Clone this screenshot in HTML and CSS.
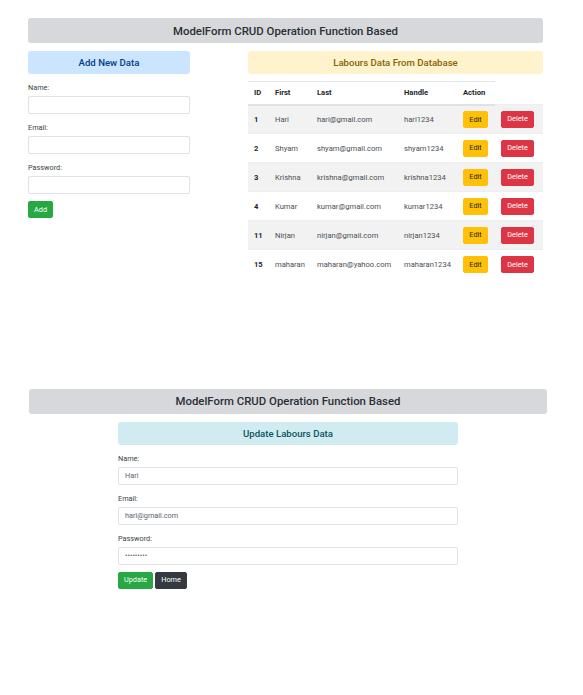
FILE: index.html
```html
<!DOCTYPE html>
<html>
<head>
<meta charset="utf-8">
<link rel="stylesheet" href="styles.css">
</head>
<body>
<section class="page page-one">
  <div class="banner">ModelForm CRUD Operation Function Based</div>
  <div class="columns">
    <div class="left">
      <div class="alert alert-primary">Add New Data</div>
      <form class="form">
        <label class="lbl">Name:</label>
        <input class="field" type="text">
        <label class="lbl">Email:</label>
        <input class="field" type="text">
        <label class="lbl">Password:</label>
        <input class="field" type="password">
        <button type="button" class="btn btn-green">Add</button>
      </form>
    </div>
    <div class="right">
      <div class="alert alert-warning">Labours Data From Database</div>
      <table class="tbl">
        <colgroup>
          <col class="c-id"><col class="c-first"><col class="c-last"><col class="c-handle"><col class="c-edit"><col class="c-del">
        </colgroup>
        <thead>
          <tr><th>ID</th><th>First</th><th>Last</th><th>Handle</th><th>Action</th></tr>
        </thead>
        <tbody>
          <tr class="odd"><th>1</th><td>Hari</td><td>hari@gmail.com</td><td>hari1234</td><td><span class="btn btn-yellow">Edit</span></td><td><span class="btn btn-red">Delete</span></td></tr>
          <tr><th>2</th><td>Shyam</td><td>shyam@gmail.com</td><td>shyam1234</td><td><span class="btn btn-yellow">Edit</span></td><td><span class="btn btn-red">Delete</span></td></tr>
          <tr class="odd"><th>3</th><td>Krishna</td><td>krishna@gmail.com</td><td>krishna1234</td><td><span class="btn btn-yellow">Edit</span></td><td><span class="btn btn-red">Delete</span></td></tr>
          <tr><th>4</th><td>Kumar</td><td>kumar@gmail.com</td><td>kumar1234</td><td><span class="btn btn-yellow">Edit</span></td><td><span class="btn btn-red">Delete</span></td></tr>
          <tr class="odd"><th>11</th><td>Nirjan</td><td>nirjan@gmail.com</td><td>nirjan1234</td><td><span class="btn btn-yellow">Edit</span></td><td><span class="btn btn-red">Delete</span></td></tr>
          <tr><th>15</th><td>maharan</td><td>maharan@yahoo.com</td><td>maharan1234</td><td><span class="btn btn-yellow">Edit</span></td><td><span class="btn btn-red">Delete</span></td></tr>
        </tbody>
      </table>
    </div>
  </div>
</section>

<section class="page page-two">
  <div class="banner">ModelForm CRUD Operation Function Based</div>
  <div class="update">
    <div class="alert alert-info">Update Labours Data</div>
    <form class="form">
      <label class="lbl">Name:</label>
      <input class="field" type="text" value="Hari">
      <label class="lbl">Email:</label>
      <input class="field" type="text" value="hari@gmail.com">
      <label class="lbl">Password:</label>
      <input class="field" type="password" value="hari12345">
      <div class="btn-row">
        <button type="button" class="btn btn-green">Update</button>
        <button type="button" class="btn btn-dark">Home</button>
      </div>
    </form>
  </div>
</section>
</body>
</html>
```

FILE: styles.css
```css
* { box-sizing: border-box; }
body {
  margin: 0;
  font-family: "Roboto", "Open Sans", sans-serif;
  color: #212529;
  background: #fff;
  font-size: 7.6px;
}
.page-one { width: 515px; margin: 18px 0 0 28px; }
.page-two { width: 518px; margin: 110px 0 0 29px; }

.banner {
  height: 25px;
  background: #d6d8db;
  border-radius: 3px;
  display: flex;
  align-items: center;
  justify-content: center;
  font-size: 11.4px;
  font-weight: 500;
  color: #2b2f33;
}
.columns { display: flex; gap: 58px; margin-top: 8px; }
.left { width: 162px; }
.right { width: 295px; }

.alert {
  height: 23px;
  border-radius: 3px;
  display: flex;
  align-items: center;
  justify-content: center;
  font-size: 9.6px;
  font-weight: 500;
}
.alert-primary { background: #cce5ff; color: #004085; }
.alert-warning { background: #fff3cd; color: #856404; }
.alert-info { background: #d1ecf1; color: #0c5460; }

.form { display: flex; flex-direction: column; align-items: stretch; padding-top: 8px; }
.lbl { display: block; height: 11px; line-height: 11px; font-size: 7.3px; color: #3a3f44; margin-bottom: 3px; }
.field {
  height: 18px;
  margin: 0 0 8px;
  border: 1px solid #dfe3e7;
  border-radius: 2px;
  padding: 0 6px;
  font-family: inherit;
  font-size: 7.3px;
  color: #5a6169;
  background: #fff;
  outline: none;
}
.form > .btn { align-self: flex-start; margin-top: -1px; }

.btn {
  display: inline-flex;
  align-items: center;
  justify-content: center;
  height: 17px;
  padding: 0 5px;
  border: 1px solid transparent;
  border-radius: 2px;
  font-family: inherit;
  font-size: 7.3px;
  line-height: 1;
  color: #fff;
}
.btn-green { background: #28a745; border-color: #28a745; }
.btn-dark { background: #343a40; border-color: #343a40; }
.btn-yellow { background: #ffc107; border-color: #ffc107; color: #212529; width: 25px; }
.btn-red { background: #dc3545; border-color: #dc3545; width: 33px; }

.tbl {
  margin-top: 7px;
  width: 295px;
  border-collapse: collapse;
  table-layout: fixed;
  font-size: 7.6px;
}
.c-id { width: 21px; }
.c-first { width: 42px; }
.c-last { width: 87px; }
.c-handle { width: 59px; }
.c-edit { width: 38px; }
.c-del { width: 48px; }
.tbl thead th {
  height: 23px;
  text-align: left;
  padding: 0 0 0 6px;
  font-weight: 700;
  color: #212529;
  border-top: 1px solid #e3e6e9;
  border-bottom: 2px solid #dee2e6;
}
.tbl tbody th, .tbl tbody td {
  height: 29px;
  padding: 0 0 0 6px;
  text-align: left;
  vertical-align: middle;
  border-top: 1px solid #eceef0;
  white-space: nowrap;
}
.tbl tbody th { font-weight: 700; color: #212529; }
.tbl tbody td { color: #4a4f55; font-weight: 400; }
.tbl tbody tr.odd th, .tbl tbody tr.odd td { background: #f2f2f2; }

.update { width: 340px; margin: 8px 0 0 89px; }
.btn-row { display: flex; gap: 2px; margin-top: -1px; }
```
